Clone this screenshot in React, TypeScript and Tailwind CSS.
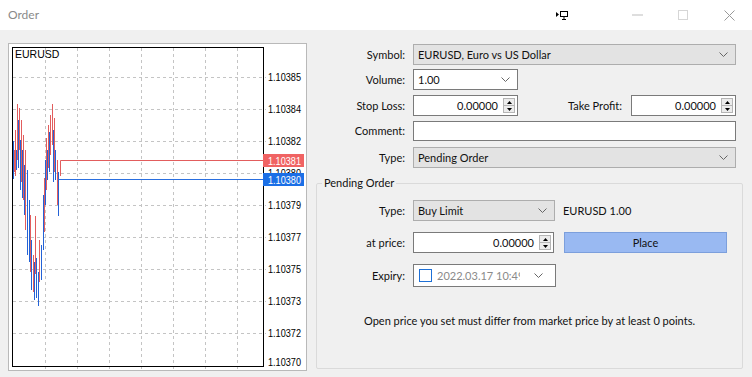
import React from "react";

// bar chart segments: x, top, bottom, colour
const bars: [number, number, number, string][] = [
  [13, 141, 179, "#2462d6"],
  [14, 150, 172, "#e25d5d"],
  [15, 130, 176, "#e25d5d"],
  [16, 150, 170, "#2462d6"],
  [17, 104, 160, "#e25d5d"],
  [18, 120, 168, "#2462d6"],
  [19, 108, 150, "#e25d5d"],
  [20, 140, 190, "#2462d6"],
  [21, 120, 182, "#e25d5d"],
  [22, 150, 198, "#2462d6"],
  [23, 135, 200, "#e25d5d"],
  [24, 165, 215, "#2462d6"],
  [25, 150, 230, "#e25d5d"],
  [27, 170, 255, "#2462d6"],
  [29, 200, 262, "#2462d6"],
  [30, 215, 272, "#e25d5d"],
  [31, 240, 290, "#2462d6"],
  [33, 255, 292, "#e25d5d"],
  [34, 262, 300, "#2462d6"],
  [35, 216, 274, "#e25d5d"],
  [36, 258, 298, "#2462d6"],
  [38, 272, 306, "#2462d6"],
  [39, 240, 282, "#e25d5d"],
  [41, 245, 280, "#2462d6"],
  [43, 195, 250, "#2462d6"],
  [44, 178, 232, "#e25d5d"],
  [45, 160, 205, "#2462d6"],
  [46, 138, 190, "#e25d5d"],
  [47, 150, 180, "#2462d6"],
  [48, 125, 168, "#e25d5d"],
  [49, 132, 172, "#2462d6"],
  [50, 115, 155, "#e25d5d"],
  [52, 104, 145, "#e25d5d"],
  [53, 130, 182, "#2462d6"],
  [54, 118, 172, "#e25d5d"],
  [55, 150, 180, "#2462d6"],
  [57, 160, 205, "#e25d5d"],
  [58, 172, 216, "#2462d6"],
];

const hGrid = [77, 109, 141, 173, 205, 237, 269, 301, 333];
const vGrid = [45, 77, 109, 141, 173, 205, 237];
const prices: [number, string][] = [
  [77, "1.10385"],
  [109, "1.10384"],
  [141, "1.10382"],
  [173, "1.10380"],
  [205, "1.10379"],
  [237, "1.10377"],
  [269, "1.10375"],
  [301, "1.10373"],
  [333, "1.10372"],
  [362, "1.10370"],
];

function Chart() {
  return (
    <div className="ml-[8px] mt-[13px] w-[299px] h-[328px] bg-white border border-[#b9b9b9] shrink-0">
      <svg width="297" height="326" viewBox="9 44 297 326" className="block">
        {hGrid.map((y) => (
          <line key={"h" + y} x1="13" x2="266" y1={y + 0.5} y2={y + 0.5} stroke="#c4c4c4" strokeDasharray="3 3" />
        ))}
        {vGrid.map((x) => (
          <line key={"v" + x} x1={x + 0.5} x2={x + 0.5} y1="48" y2="369" stroke="#c4c4c4" strokeDasharray="3 3" />
        ))}
        {bars.map(([x, a, b, c], i) => (
          <line key={i} x1={x + 0.5} x2={x + 0.5} y1={a} y2={b} stroke={c} strokeWidth="1" />
        ))}
        <polyline points="60.5,176 60.5,160.5 263,160.5" fill="none" stroke="#e25d5d" />
        <line x1="58" x2="263" y1="179.5" y2="179.5" stroke="#2a6fe0" strokeWidth="1" />
        <rect x="12.5" y="47.5" width="251" height="319" fill="none" stroke="#000" />
        {prices.map(([y, p]) => (
          <text key={p + y} x="268" y={y + 4} fontSize="10.5" fill="#000" fontFamily="Liberation Sans, sans-serif" textLength="33" lengthAdjust="spacingAndGlyphs">
            {p}
          </text>
        ))}
        <rect x="263" y="154" width="41" height="13" fill="#f06363" />
        <text x="268" y="164.5" fontSize="10.5" fill="#fff" fontFamily="Liberation Sans, sans-serif" textLength="33" lengthAdjust="spacingAndGlyphs">1.10381</text>
        <rect x="263" y="173" width="41" height="13" fill="#1b6fe6" />
        <text x="268" y="183.5" fontSize="10.5" fill="#fff" fontFamily="Liberation Sans, sans-serif" textLength="33" lengthAdjust="spacingAndGlyphs">1.10380</text>
        <text x="15" y="58" fontSize="10.5" fill="#000" fontFamily="Liberation Sans, sans-serif">EURUSD</text>
      </svg>
    </div>
  );
}

function Chevron() {
  return (
    <svg width="9" height="5" viewBox="0 0 9 5" className="shrink-0">
      <path d="M0.5 0.5 L4.5 4.5 L8.5 0.5" fill="none" stroke="#666" strokeWidth="1" />
    </svg>
  );
}

function Spinner() {
  return (
    <div className="w-[12px] self-stretch my-[2px] mr-[2px] flex flex-col border border-[#b5b5b5] bg-[#ececec] shrink-0">
      <div className="flex-1 flex items-center justify-center border-b border-[#b5b5b5]">
        <svg width="5" height="3" viewBox="0 0 5 3"><path d="M2.5 0 L5 3 L0 3 Z" fill="#000" /></svg>
      </div>
      <div className="flex-1 flex items-center justify-center">
        <svg width="5" height="3" viewBox="0 0 5 3"><path d="M0 0 L5 0 L2.5 3 Z" fill="#000" /></svg>
      </div>
    </div>
  );
}

function Label({ text, w = "w-[89px]" }: { text: string; w?: string }) {
  return <div className={`${w} text-right shrink-0`}>{text}</div>;
}

function GraySelect({ value, w }: { value: string; w: string }) {
  return (
    <div className={`${w} h-[21px] ml-2 flex items-center pl-[4px] pr-[7px] bg-[#e3e3e3] border border-[#adadad]`}>
      <span className="flex-1">{value}</span>
      <Chevron />
    </div>
  );
}

function NumInput({ w }: { w: string }) {
  return (
    <div className={`${w} h-[21px] flex items-center bg-white border border-[#7a7a7a]`}>
      <span className="flex-1 text-right pr-[5px]">0.00000</span>
      <Spinner />
    </div>
  );
}

export default function App() {
  return (
    <div className="w-[752px] h-[377px] bg-[#f0f0f0] flex flex-col overflow-hidden text-[11px] leading-[16px] text-[#111] font-['Lato','Liberation_Sans',sans-serif]">
      {/* title bar */}
      <div className="h-[30px] bg-white flex items-center shrink-0">
        <span className="pl-[8px] text-[12px] text-[#8a8a8a]">Order</span>
        <div className="flex-1" />
        <svg width="12" height="10" viewBox="0 0 12 10" className="mr-[46px]">
          <path d="M0 2 L3 4.5 L0 7 Z" fill="#000" />
          <rect x="4.5" y="1.5" width="7" height="5" fill="none" stroke="#000" />
          <path d="M8 7 V9 M6 9.5 H10" stroke="#000" />
        </svg>
        <div className="w-[46px] flex justify-center">
          <svg width="11" height="2" viewBox="0 0 11 2"><path d="M0 1 H11" stroke="#bdbdbd" /></svg>
        </div>
        <div className="w-[46px] flex justify-center">
          <svg width="10" height="10" viewBox="0 0 10 10"><rect x="0.5" y="0.5" width="9" height="9" fill="none" stroke="#d6d6d6" /></svg>
        </div>
        <div className="w-[46px] flex justify-center">
          <svg width="11" height="11" viewBox="0 0 11 11"><path d="M0.5 0.5 L10.5 10.5 M10.5 0.5 L0.5 10.5" stroke="#999" /></svg>
        </div>
      </div>

      <div className="flex flex-1">
        <Chart />

        <div className="ml-[9px] w-[427px] flex flex-col pt-[14px]">
          <div className="w-[420px] flex flex-col">
            <div className="flex items-center">
              <Label text="Symbol:" />
              <GraySelect value="EURUSD, Euro vs US Dollar" w="w-[323px]" />
            </div>
            <div className="flex items-center mt-[4px]">
              <Label text="Volume:" />
              <div className="w-[105px] h-[21px] ml-2 flex items-center pl-[4px] pr-[7px] bg-white border border-[#7a7a7a]">
                <span className="flex-1">1.00</span>
                <Chevron />
              </div>
            </div>
            <div className="flex items-center mt-[5px]">
              <Label text="Stop Loss:" />
              <div className="ml-2">
                <NumInput w="w-[105px]" />
              </div>
              <div className="flex-1 text-right pr-[9px]">Take Profit:</div>
              <NumInput w="w-[105px]" />
            </div>
            <div className="flex items-center mt-[5px]">
              <Label text="Comment:" />
              <div className="w-[323px] h-[20px] ml-2 bg-white border border-[#7a7a7a]" />
            </div>
            <div className="flex items-center mt-[6px]">
              <Label text="Type:" />
              <GraySelect value="Pending Order" w="w-[323px]" />
            </div>
          </div>

          <fieldset className="mt-[7px] w-[427px] h-[194px] border border-[#dadada] rounded-[2px]">
            <legend className="ml-[5px] px-[2px]">Pending Order</legend>
            <div className="flex items-center mt-[9px]">
              <Label text="Type:" w="w-[88px]" />
              <GraySelect value="Buy Limit" w="w-[142px]" />
              <span className="ml-2">EURUSD 1.00</span>
            </div>
            <div className="flex items-center mt-[11px]">
              <Label text="at price:" w="w-[88px]" />
              <div className="ml-2">
                <NumInput w="w-[141px]" />
              </div>
              <div className="ml-[10px] w-[163px] h-[21px] flex items-center justify-center bg-[#99b9f2] border border-[#7c9fdc]">
                Place
              </div>
            </div>
            <div className="flex items-center mt-[11px]">
              <Label text="Expiry:" w="w-[88px]" />
              <div className="w-[143px] h-[23px] ml-2 flex items-center pl-[5px] pr-[12px] bg-white border border-[#7a7a7a]">
                <div className="w-[13px] h-[13px] border border-[#1e70d6] shrink-0" />
                <span className="ml-[5px] w-[83px] overflow-hidden whitespace-nowrap text-[#8a8a8a]">2022.03.17 10:49</span>
                <div className="flex-1" />
                <Chevron />
              </div>
            </div>
            <div className="mt-[26px] text-center">
              Open price you set must differ from market price by at least 0 points.
            </div>
          </fieldset>
        </div>
      </div>
    </div>
  );
}
